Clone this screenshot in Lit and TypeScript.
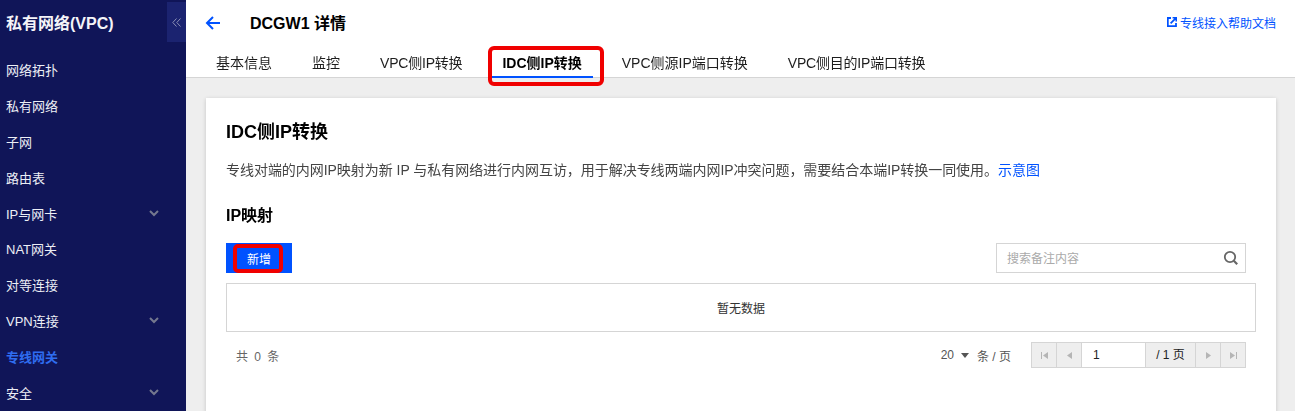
import { LitElement, html, css, svg } from "lit";
import { customElement } from "lit/decorators.js";

const chevron = html`<svg class="chev" width="10" height="7" viewBox="0 0 10 7"><path d="M1 1l4 4 4-4" fill="none" stroke="#74788f" stroke-width="2"/></svg>`;

const menu: { t: string; arrow?: boolean; active?: boolean }[] = [
  { t: "网络拓扑" }, { t: "私有网络" }, { t: "子网" }, { t: "路由表" },
  { t: "IP与网卡", arrow: true }, { t: "NAT网关" }, { t: "对等连接" },
  { t: "VPN连接", arrow: true }, { t: "专线网关", active: true }, { t: "安全", arrow: true },
];

const tabs: { t: string; cls: string; mark?: boolean }[] = [
  { t: "基本信息", cls: "" },
  { t: "监控", cls: "" },
  { t: "VPC侧IP转换", cls: "tight" },
  { t: "IDC侧IP转换", cls: "on", mark: true },
  { t: "VPC侧源IP端口转换", cls: "" },
  { t: "VPC侧目的IP端口转换", cls: "tight" },
];

const pageIcon = (d: string) => html`<svg width="9" height="9" viewBox="0 0 9 9">${svg`<path d=${d} fill="#b5b5b5"/>`}</svg>`;

@customElement("app-root")
export class AppRoot extends LitElement {
  static styles = css`
    :host { display: flex; width: 1295px; height: 411px; overflow: hidden; background: #eeeeee; color: #000;
      font-family: "Liberation Sans", "Noto Sans CJK SC", sans-serif; font-size: 12px; }
    .side { width: 186px; flex: none; background: #101558; color: #fff; display: flex; flex-direction: column; position: relative; }
    .side-title { height: 48px; padding: 0 0 0 6px; font-size: 16px; font-weight: 700; line-height: 48px; color: #f4f4f8; }
    .collapse { position: absolute; left: 167px; top: 2px; width: 19px; height: 40px; background: #1b2370; display: flex; align-items: center; justify-content: center; }
    .menu { display: flex; flex-direction: column; padding-top: 4px; }
    .item { height: 35.8px; display: flex; align-items: center; justify-content: space-between; padding: 0 27px 0 6px; font-size: 13px; color: #eceef5; }
    .item.active { color: #2f6df0; font-weight: 700; }
    .main { flex: 1; min-width: 0; display: flex; flex-direction: column; }
    .head { height: 78px; flex: none; box-sizing: border-box; background: #fff; border-bottom: 1px solid #d5d5d5; display: flex; flex-direction: column; }
    .bar { height: 44px; display: flex; align-items: center; padding: 0 19px; flex: none; }
    .back { width: 16px; height: 16px; margin: 2px 29px 0 0; display: block; }
    .h-title { font-size: 16px; font-weight: 700; flex: 1; }
    .help { color: #0052ff; font-size: 12px; display: flex; align-items: center; gap: 3px; }
    .tabs { display: flex; gap: 40px; padding: 2px 0 0 30px; position: relative; will-change: transform; }
    .tab { font-size: 14px; height: 31px; line-height: 34px; color: #1e1e1e; position: relative; white-space: nowrap; }
    .tab.tight { letter-spacing: -0.2px; }
    .tab.on { font-weight: 700; color: #000; }
    .tab.on::after { content: ""; position: absolute; left: -10px; right: -11px; bottom: -1px; height: 2px; background: #0052ff; }
    .tab .mark { position: absolute; left: -14px; right: -22px; top: 0; height: 40px; box-sizing: border-box; border: 4px solid #f00000; border-radius: 6px; }
    .body { flex: 1; min-height: 0; padding: 20px 19px 0 20px; }
    .card { height: 340px; background: #fff; box-shadow: 0 1px 4px rgba(0,0,0,.18); padding: 22px 20px 0 20px; box-sizing: border-box; }
    h2 { margin: 0; font-size: 18px; line-height: 24px; font-weight: 700; color: #000; will-change: transform; }
    .desc { margin: 16px 0 0; font-size: 14px; line-height: 20px; color: #444; white-space: nowrap; letter-spacing: -0.04px; will-change: transform; }
    .desc a { color: #0052ff; }
    h3 { margin: 24px 0 0; font-size: 16px; line-height: 24px; font-weight: 700; color: #000; will-change: transform; }
    .tools { display: flex; justify-content: space-between; align-items: center; margin: 15px 10px 0 0; height: 30px; }
    .add { width: 66px; height: 30px; background: #0052ff; color: #fff; font-size: 12px; display: flex; align-items: center; justify-content: center; position: relative; }
    .add .mark { position: absolute; left: 7px; top: 1px; width: 50px; height: 29px; box-sizing: border-box; border: 4px solid #f00000; border-radius: 5px; }
    .search { width: 250px; height: 30px; box-sizing: border-box; border: 1px solid #d5d5d5; display: flex; align-items: center; justify-content: space-between; padding: 0 6px 0 10px; color: #aaa; font-size: 12px; }
    .search span { padding-bottom: 2px; }
    .empty { margin-top: 10px; height: 49px; box-sizing: border-box; border: 1px solid #d5d5d5; display: flex; align-items: center; justify-content: center; font-size: 12px; color: #333; }
    .foot { display: flex; align-items: center; height: 26px; margin: 10px 10px 0 0; color: #666; font-size: 12px; padding-left: 10px; }
    .total { flex: 1; word-spacing: 3px; }
    .size { display: flex; align-items: center; gap: 7px; color: #555; margin-right: 20px; }
    .caret { width: 0; height: 0; border: 4px solid transparent; border-top: 5px solid #555; border-bottom: 0; margin-right: 1px; }
    .pager { display: flex; height: 26px; box-sizing: border-box; border: 1px solid #d5d5d5; background: #eee; }
    .pbtn { width: 24px; display: flex; align-items: center; justify-content: center; border-right: 1px solid #d5d5d5; }
    .pbtn:last-child { border-right: 0; }
    .pnum { width: 64px; background: #fff; border-right: 1px solid #d5d5d5; line-height: 24px; padding-left: 11px; box-sizing: border-box; color: #222; }
    .ptotal { width: 49px; border-right: 1px solid #d5d5d5; line-height: 24px; text-align: center; color: #222; }
  `;

  render() {
    return html`
      <aside class="side">
        <div class="side-title">私有网络(VPC)</div>
        <div class="collapse"><svg width="9" height="9" viewBox="0 0 9 9"><path d="M4.5.5L.8 4.5l3.7 4M8.5.5L4.8 4.5l3.7 4" fill="none" stroke="#8b90b5" stroke-width="1"/></svg></div>
        <nav class="menu">
          ${menu.map((m) => html`<div class="item ${m.active ? "active" : ""}"><span>${m.t}</span>${m.arrow ? chevron : ""}</div>`)}
        </nav>
      </aside>
      <div class="main">
        <header class="head">
          <div class="bar">
            <svg class="back" viewBox="0 0 16 16"><path d="M15 8H2M8 2L2 8l6 6" fill="none" stroke="#0052ff" stroke-width="2"/></svg>
            <div class="h-title">DCGW1 详情</div>
            <div class="help">
              <svg width="10" height="10" viewBox="0 0 10 10"><path d="M4 1H.8v8.2H9V6" fill="none" stroke="#0052ff" stroke-width="1.8"/><path d="M3.6 6.4L8.6 1.4M5.6.7h3.7v3.7" fill="none" stroke="#0052ff" stroke-width="1.7"/></svg>
              <span>专线接入帮助文档</span>
            </div>
          </div>
          <div class="tabs">
            ${tabs.map((t) => html`<div class="tab ${t.cls}">${t.t}${t.mark ? html`<span class="mark"></span>` : ""}</div>`)}
          </div>
        </header>
        <div class="body">
          <section class="card">
            <h2>IDC侧IP转换</h2>
            <p class="desc">专线对端的内网IP映射为新 IP 与私有网络进行内网互访，用于解决专线两端内网IP冲突问题，需要结合本端IP转换一同使用。<a>示意图</a></p>
            <h3>IP映射</h3>
            <div class="tools">
              <div class="add">新增<span class="mark"></span></div>
              <div class="search"><span>搜索备注内容</span>
                <svg width="16" height="16" viewBox="0 0 16 16"><circle cx="7" cy="7" r="5.2" fill="none" stroke="#666" stroke-width="1.8"/><path d="M10.8 10.8l3.4 3.4" stroke="#666" stroke-width="2.2"/></svg>
              </div>
            </div>
            <div class="empty">暂无数据</div>
            <div class="foot">
              <span class="total">共 0 条</span>
              <span class="size">20 <i class="caret"></i> 条 / 页</span>
              <div class="pager">
                <span class="pbtn">${pageIcon("M1 1h1v7H1zM8 1v7L3 4.5z")}</span>
                <span class="pbtn">${pageIcon("M7 1v7L2 4.5z")}</span>
                <span class="pnum">1</span>
                <span class="ptotal">/ 1 页</span>
                <span class="pbtn">${pageIcon("M2 1v7l5-3.5z")}</span>
                <span class="pbtn">${pageIcon("M1 1v7l5-3.5zM7 1h1v7H7z")}</span>
              </div>
            </div>
          </section>
        </div>
      </div>
    `;
  }
}
